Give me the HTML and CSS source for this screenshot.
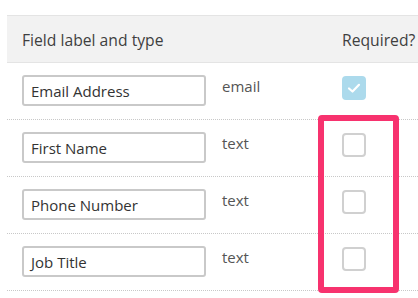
FILE: index.html
```html
<!DOCTYPE html>
<html>
<head>
<meta charset="utf-8">
<link rel="stylesheet" href="styles.css">
</head>
<body>
<div class="page">
  <div class="table">
    <div class="head">
      <div class="col-field">Field label and type</div>
      <div class="col-req">Required?</div>
    </div>
    <div class="row">
      <div class="col-field"><div class="input">Email Address</div></div>
      <div class="col-type">email</div>
      <div class="col-req"><span class="box checked"><svg width="16" height="16" viewBox="0 0 16 16"><polyline points="3,8.5 6.5,11.5 13,4.8" fill="none" stroke="#fff" stroke-width="2.2" stroke-linecap="round" stroke-linejoin="round"/></svg></span></div>
    </div>
    <div class="row">
      <div class="col-field"><div class="input">First Name</div></div>
      <div class="col-type">text</div>
      <div class="col-req"><span class="box"></span></div>
    </div>
    <div class="row">
      <div class="col-field"><div class="input">Phone Number</div></div>
      <div class="col-type">text</div>
      <div class="col-req"><span class="box"></span></div>
    </div>
    <div class="row">
      <div class="col-field"><div class="input">Job Title</div></div>
      <div class="col-type">text</div>
      <div class="col-req"><span class="box"></span></div>
    </div>
  </div>
  <div class="highlight"></div>
</div>
</body>
</html>
```
FILE: styles.css
```css
html, body {
  margin: 0;
  padding: 0;
  background: #fff;
}
body {
  font-family: "Open Sans", "Liberation Sans", sans-serif;
  font-size: 15px;
  color: #333;
}
.page {
  position: relative;
  width: 418px;
  height: 298px;
  overflow: hidden;
}
.table {
  margin: 15px 0 0 7px;
}
.head {
  display: flex;
  align-items: center;
  height: 48px;
  box-sizing: border-box;
  padding-top: 2px;
  background: #f2f2f2;
  border-top: 1px solid #e4e4e4;
  border-bottom: 1px solid #e4e4e4;
  color: #3f3f3f;
  font-size: 15.7px;
}
.head .col-field {
  width: 335px;
  padding-left: 15px;
  box-sizing: border-box;
}
.row {
  display: flex;
  align-items: flex-start;
  height: 57px;
  box-sizing: border-box;
  border-bottom: 1px dotted #c8c8c8;
}
.row .col-field {
  width: 215px;
  padding: 12px 0 0 15px;
  box-sizing: border-box;
}
.input {
  width: 184px;
  height: 31px;
  box-sizing: border-box;
  border: 2px solid #c9c9c9;
  border-radius: 3px;
  padding: 1px 0 0 7px;
  line-height: 27px;
  font-size: 15px;
  color: #333;
}
.col-type {
  width: 120px;
  padding-top: 13px;
  color: #555;
  line-height: 20px;
}
.row .col-req {
  padding-top: 13px;
}
.box {
  display: flex;
  align-items: center;
  justify-content: center;
  width: 24px;
  height: 24px;
  box-sizing: border-box;
  border: 2px solid #d0d0d0;
  border-radius: 4px;
  background: #fff;
}
.box.checked {
  border-color: #acdaec;
  background: #acdaec;
}
.highlight {
  position: absolute;
  left: 318px;
  top: 115px;
  width: 81px;
  height: 178px;
  box-sizing: border-box;
  border: 6px solid #f7326e;
  border-radius: 4px;
}
```
